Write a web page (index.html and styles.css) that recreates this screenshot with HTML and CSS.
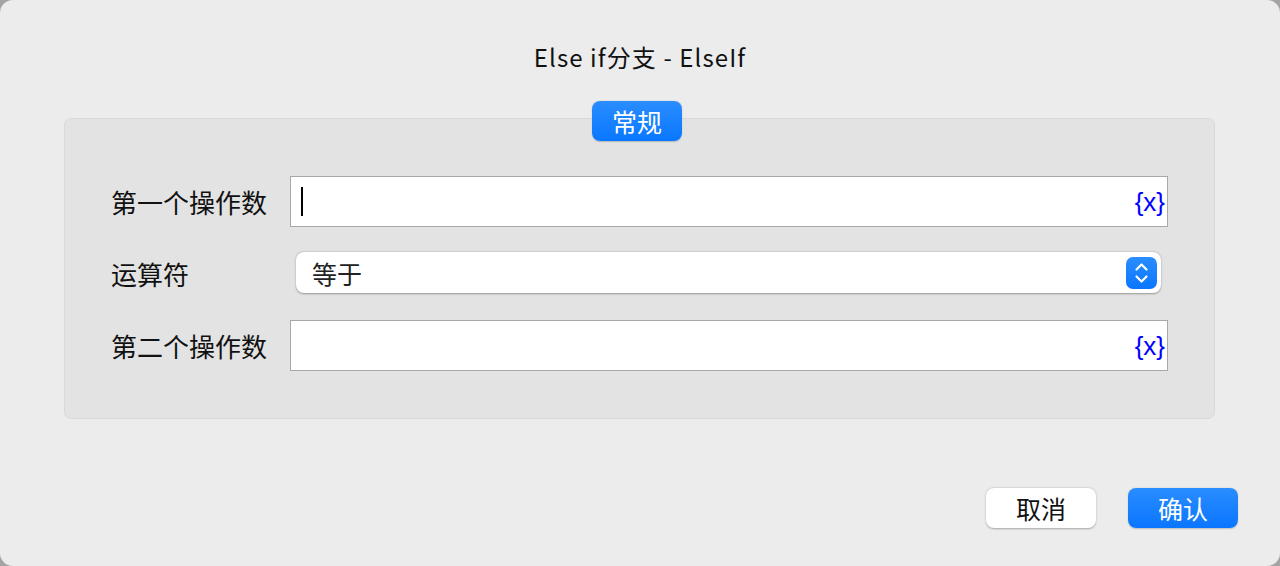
FILE: index.html
```html
<!DOCTYPE html>
<html lang="zh">
<head>
<meta charset="utf-8">
<title>Else if分支 - ElseIf</title>
<link rel="stylesheet" href="styles.css">
</head>
<body>
<div class="window">
  <div class="title">Else if分支 - ElseIf</div>
  <div class="group">
    <div class="tab">常规</div>
    <div class="form">
      <div class="label">第一个操作数</div>
      <div class="field">
        <span class="caret"></span>
        <span class="var">{x}</span>
      </div>
      <div class="label">运算符</div>
      <div class="select-row">
        <div class="select">
          <span class="select-text">等于</span>
          <span class="stepper">
            <svg width="31" height="32" viewBox="0 0 31 32">
              <path d="M10.5 12.5 L15.5 7.5 L20.5 12.5" fill="none" stroke="#fff" stroke-width="2.2" stroke-linecap="round" stroke-linejoin="round"/>
              <path d="M10.5 19.5 L15.5 24.5 L20.5 19.5" fill="none" stroke="#fff" stroke-width="2.2" stroke-linecap="round" stroke-linejoin="round"/>
            </svg>
          </span>
        </div>
      </div>
      <div class="label">第二个操作数</div>
      <div class="field">
        <span class="var">{x}</span>
      </div>
    </div>
  </div>
  <div class="buttons">
    <button class="btn btn-cancel">取消</button>
    <button class="btn btn-ok">确认</button>
  </div>
</div>
</body>
</html>
```

FILE: styles.css
```css
html, body {
  margin: 0;
  padding: 0;
  background: #a4a4a4;
}
body {
  font-family: "Noto Sans CJK SC", "Noto Sans", sans-serif;
  color: #1d1d1d;
}
.window {
  width: 1280px;
  height: 566px;
  box-sizing: border-box;
  background: #ececec;
  border-radius: 13px;
  display: flex;
  flex-direction: column;
  padding: 0 42px 38px 64px;
  overflow: hidden;
}
.title {
  text-align: center;
  font-size: 24px;
  letter-spacing: 1.1px;
  line-height: 32px;
  margin-top: 41px;
  margin-right: 22px;
  height: 32px;
  color: #111;
}
.group {
  position: relative;
  margin-top: 45px;
  width: 1151px;
  height: 301px;
  box-sizing: border-box;
  background: #e3e3e3;
  border: 1px solid #d9d9d9;
  border-radius: 7px;
  padding: 57px 46px 0 46px;
}
.tab {
  position: absolute;
  top: -18px;
  left: 527px;
  width: 90px;
  height: 40px;
  border-radius: 8px;
  background: linear-gradient(#2b8dff, #0877ff);
  color: #fff;
  font-size: 25px;
  line-height: 40px;
  text-align: center;
  box-shadow: 0 0.5px 1.5px rgba(0,0,0,0.2);
}
.form {
  display: grid;
  grid-template-columns: 179px 1fr;
  grid-auto-rows: 51px;
  row-gap: 21px;
  align-items: center;
}
.label {
  font-size: 26px;
  color: #111;
  line-height: 34px;
}
.field {
  height: 51px;
  box-sizing: border-box;
  background: #fff;
  border: 1px solid #a8a8a8;
  display: flex;
  align-items: center;
  padding: 0 2px 0 10px;
}
.caret {
  width: 2px;
  height: 29px;
  background: #000;
}
.var {
  margin-left: auto;
  color: #0000ff;
  font-size: 26px;
  line-height: 32px;
  font-family: "Liberation Sans", sans-serif;
}
.select-row {
  height: 51px;
  display: flex;
  padding: 4px 7px 6px 6px;
  box-sizing: border-box;
}
.select {
  flex: 1;
  height: 41px;
  box-sizing: border-box;
  background: #fff;
  border-radius: 8px;
  box-shadow: 0 0.5px 2px rgba(0,0,0,0.35);
  display: flex;
  align-items: center;
  padding: 0 4px 0 16px;
}
.select-text {
  font-size: 25px;
  color: #222;
}
.stepper {
  margin-left: auto;
  width: 31px;
  height: 32px;
  border-radius: 7px;
  background: linear-gradient(#2a8dff, #0a76ff);
  display: flex;
}
.buttons {
  margin-top: auto;
  display: flex;
  justify-content: flex-end;
  gap: 32px;
}
.btn {
  width: 110px;
  height: 40px;
  border: none;
  border-radius: 8px;
  font-family: "Noto Sans CJK SC", sans-serif;
  font-size: 25px;
  line-height: 40px;
  padding: 0;
}
.btn-cancel {
  background: #fff;
  color: #111;
  box-shadow: 0 0.5px 2px rgba(0,0,0,0.3);
}
.btn-ok {
  background: linear-gradient(#2a8dff, #0a76ff);
  color: #fff;
  box-shadow: 0 0.5px 1.5px rgba(0,0,0,0.2);
}
```
